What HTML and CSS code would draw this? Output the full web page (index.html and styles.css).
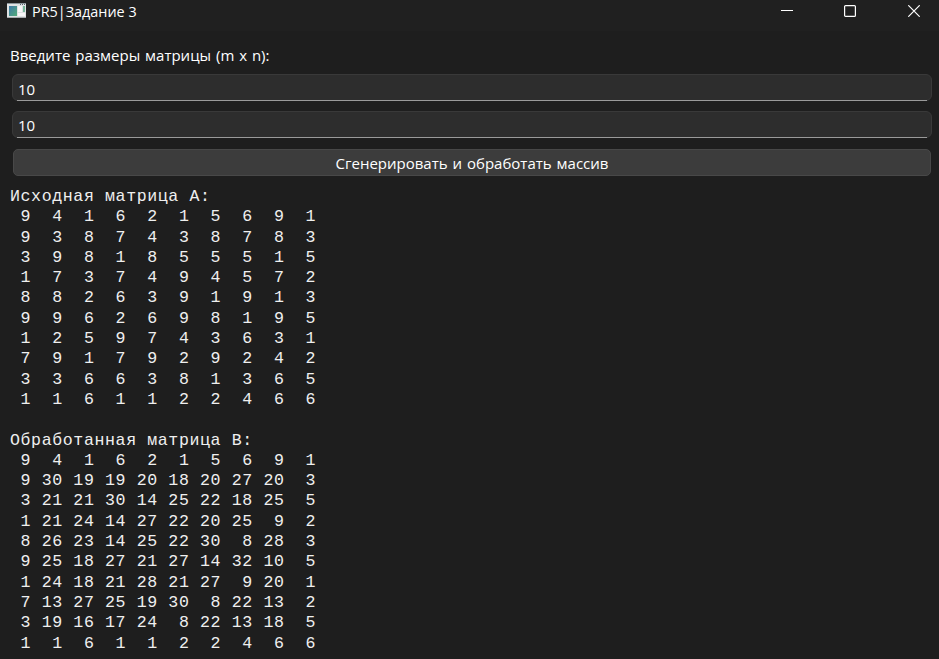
FILE: index.html
```html
<!DOCTYPE html>
<html lang="ru">
<head>
<meta charset="utf-8">
<title>PR5|Задание 3</title>
<link rel="stylesheet" href="styles.css">
</head>
<body>
<header class="titlebar">
  <svg class="app-icon" width="19" height="16" viewBox="0 0 19 16">
    <defs><linearGradient id="pane" x1="0" y1="0" x2="1" y2="1"><stop offset="0" stop-color="#3f78a8"/><stop offset="1" stop-color="#52ac79"/></linearGradient></defs>
    <rect width="19" height="15" fill="#dfe2e3"/>
    <path d="M0 .5h19" stroke="#8c969b"/>
    <path d="M0 14.5h19" stroke="#a6aaac"/>
    <path d="M13 1.5h1M15 1.5h1M17 1.5h1" stroke="#59656c"/>
    <rect x="2" y="3" width="8" height="10" fill="url(#pane)"/>
    <rect x="11" y="3" width="4" height="6" fill="#f7f7f7"/>
    <rect x="16" y="3" width="2" height="6" fill="#77b79b"/>
    <rect x="11" y="10" width="7" height="3" fill="#f7f7f7"/>
  </svg>
  <h1 class="title">PR5|Задание 3</h1>
  <div class="controls">
    <svg width="12" height="12" viewBox="0 0 12 12"><path d="M0 5.5h12" stroke="#fff"/></svg>
    <svg width="12" height="12" viewBox="0 0 12 12"><rect x=".6" y=".6" width="10.8" height="10.8" rx="1" fill="none" stroke="#fff" stroke-width="1.2"/></svg>
    <svg class="close" width="12" height="12" viewBox="0 0 12 12"><path d="M.3.3l11.4 11.4M11.7.3L.3 11.7" stroke="#fff" stroke-width="1.2"/></svg>
  </div>
</header>
<main class="content">
  <label class="prompt" for="rows">Введите размеры матрицы (m x n):</label>
  <div class="field"><input id="rows" value="10"></div>
  <div class="field"><input id="cols" class="raised" value="10"></div>
  <button class="generate"><span class="caption">Сгенерировать и обработать массив</span></button>
<pre class="output">Исходная матрица A:
 9  4  1  6  2  1  5  6  9  1
 9  3  8  7  4  3  8  7  8  3
 3  9  8  1  8  5  5  5  1  5
 1  7  3  7  4  9  4  5  7  2
 8  8  2  6  3  9  1  9  1  3
 9  9  6  2  6  9  8  1  9  5
 1  2  5  9  7  4  3  6  3  1
 7  9  1  7  9  2  9  2  4  2
 3  3  6  6  3  8  1  3  6  5
 1  1  6  1  1  2  2  4  6  6

Обработанная матрица B:
 9  4  1  6  2  1  5  6  9  1
 9 30 19 19 20 18 20 27 20  3
 3 21 21 30 14 25 22 18 25  5
 1 21 24 14 27 22 20 25  9  2
 8 26 23 14 25 22 30  8 28  3
 9 25 18 27 21 27 14 32 10  5
 1 24 18 21 28 21 27  9 20  1
 7 13 27 25 19 30  8 22 13  2
 3 19 16 17 24  8 22 13 18  5
 1  1  6  1  1  2  2  4  6  6</pre>
</main>
</body>
</html>
```
FILE: styles.css
```css
* { box-sizing: border-box; }
body {
  margin: 0;
  height: 659px;
  overflow: hidden;
  background: #1e1e1e;
  color: #fff;
  font: 15px/20px "Open Sans", "Noto Sans", sans-serif;
}
.titlebar {
  display: flex;
  align-items: flex-start;
  height: 31px;
  padding: 3px 19px 0 7px;
  background: #202020;
}
.app-icon { flex: none; }
.title {
  margin: -1px 0 0 6px;
  font-size: 14.4px;
  font-weight: 400;
}
.controls {
  display: flex;
  gap: 51px;
  margin: 2px 0 0 auto;
}
.close { margin-left: 1px; }
.content {
  display: flex;
  flex-direction: column;
  padding: 14px 7px 0 10px;
}
.prompt {
  margin-bottom: 9px;
  word-spacing: 1px;
}
.field {
  height: 27px;
  margin: 0 0 10px 2px;
  padding: 0 5px;
  border: 1px solid #393939;
  border-radius: 6px;
  background: #2d2d2d;
  position: relative;
}
.field::after {
  content: "";
  position: absolute;
  left: 4px;
  right: 4px;
  bottom: -1px;
  height: 1px;
  background: #9a9a9a;
}
.field input {
  display: block;
  width: 100%;
  height: 27px;
  padding: 0;
  border: 0;
  outline: 0;
  background: none;
  color: inherit;
  font: inherit;
}
.field .raised { height: 25px; }
.generate {
  height: 27px;
  margin: 1px 1px 11px 3px;
  padding: 0;
  border: 1px solid #484848;
  border-radius: 5px;
  background: #3c3c3c;
  color: inherit;
  font: inherit;
  word-spacing: 1px;
}
.output {
  margin: 0;
  font: 16.6px/20.29px "Liberation Mono", monospace;
  letter-spacing: .6px;
  color: #efefef;
}
```
